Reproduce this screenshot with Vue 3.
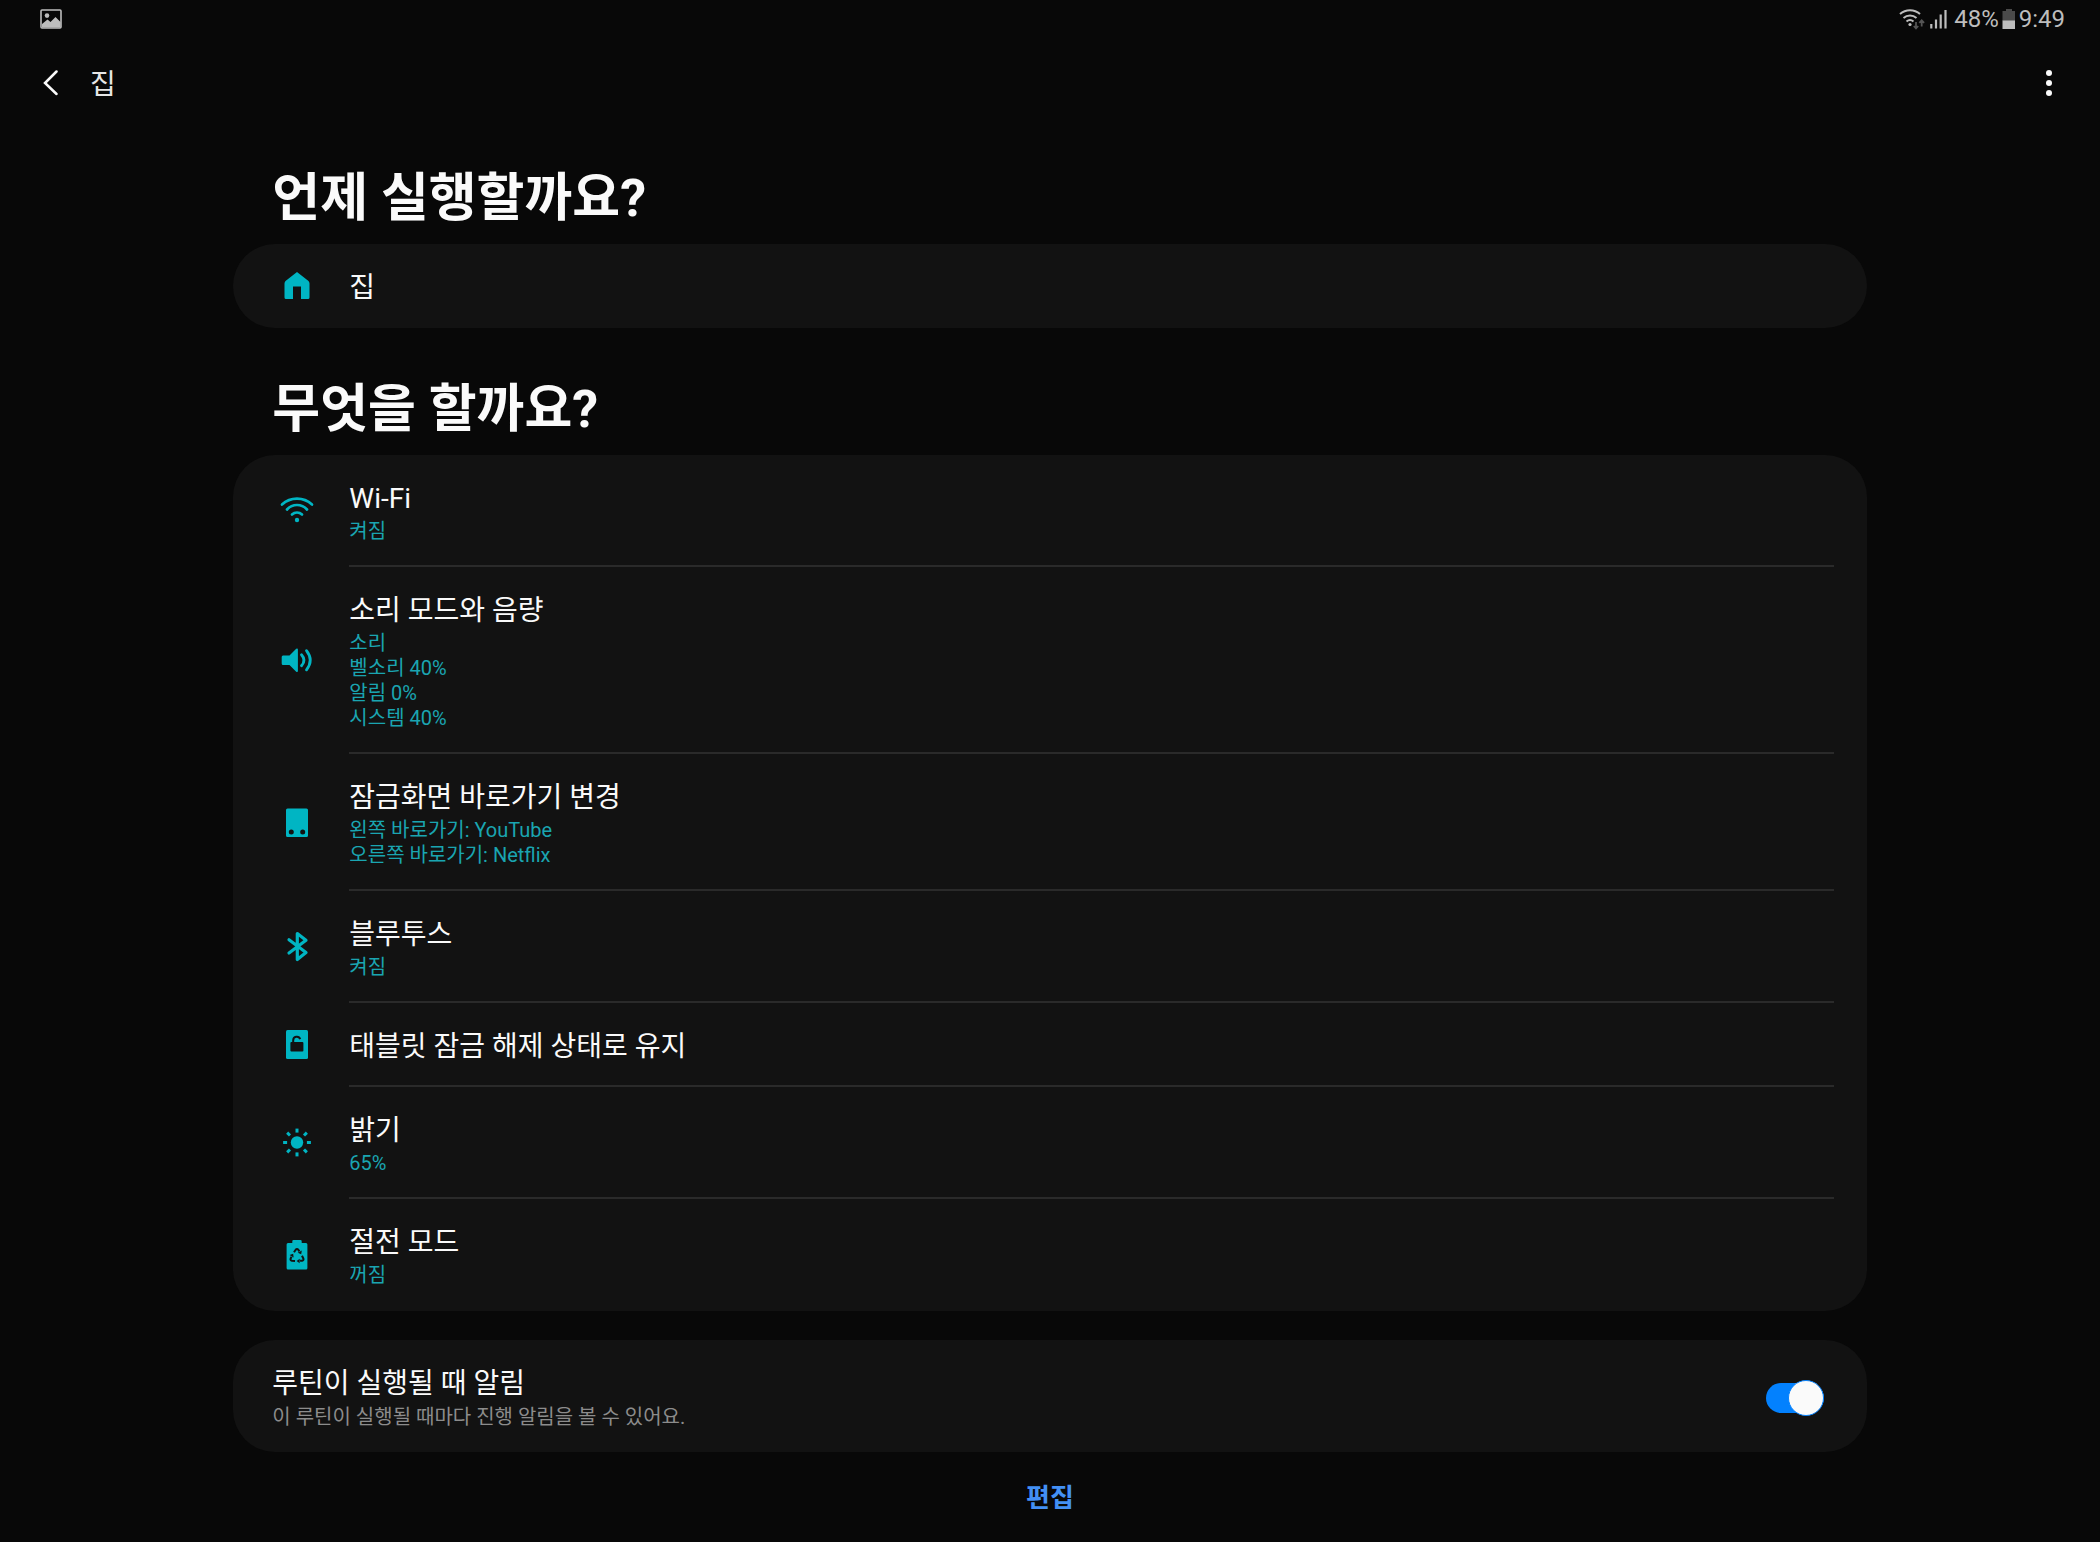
<script setup>
import { ref } from 'vue'

const notify = ref(true)

const actions = [
  { icon: 'wifi', title: 'Wi-Fi', details: ['켜짐'] },
  { icon: 'sound', title: '소리 모드와 음량', details: ['소리', '벨소리 40%', '알림 0%', '시스템 40%'] },
  { icon: 'tablet', title: '잠금화면 바로가기 변경', details: ['왼쪽 바로가기: YouTube', '오른쪽 바로가기: Netflix'] },
  { icon: 'bluetooth', title: '블루투스', details: ['켜짐'] },
  { icon: 'unlock', title: '태블릿 잠금 해제 상태로 유지', details: [] },
  { icon: 'brightness', title: '밝기', details: ['65%'] },
  { icon: 'battery', title: '절전 모드', details: ['꺼짐'] },
]
</script>

<template>
  <div class="screen">
    <div class="status-bar">
      <svg class="picture" viewBox="0 0 22 20" width="22" height="20" aria-hidden="true">
        <rect x="1" y="1" width="20" height="18" rx="1" fill="none" stroke="#bdbdbd" stroke-width="1.6" />
        <circle cx="7" cy="6.600" r="2.300" fill="#bdbdbd" />
        <path d="M2 15 L7.500 10.500 L10.500 13 L15.500 8 L20.500 13 V18.500 H2Z" fill="#bdbdbd" />
      </svg>
      <div class="status-right">
        <svg viewBox="0 0 27 22" width="27" height="22" fill="none" aria-hidden="true">
          <g stroke="#bdbdbd" stroke-width="2">
            <path d="M1 6 A15 15 0 0 1 21 6" />
            <path d="M4.500 10 A10 10 0 0 1 17.500 10" />
            <path d="M7.500 13.500 A5.500 5.500 0 0 1 14.500 13.500" />
          </g>
          <circle cx="11" cy="16.500" r="1.600" fill="#bdbdbd" />
          <path d="M17 14 V20 M14.800 18 L17 20.400 L19.200 18 M22.700 18.500 V12.500 M20.300 14.800 L22.700 12.300 L25.100 14.800" stroke="#555" stroke-width="1.800" />
        </svg>
        <svg class="signal" viewBox="0 0 17 20" width="17" height="20" aria-hidden="true">
          <path d="M1.300 15 V19.500 M6 10.500 V19.500 M10.700 5.500 V19.500 M15.500 1 V19.500" stroke="#bdbdbd" stroke-width="2.200" />
        </svg>
        <span>48%</span>
        <svg class="charge" viewBox="0 0 14 20" width="14" height="20" aria-hidden="true">
          <path d="M4 0 H10 V2 H13 V12 H0.500 V2 H4Z" fill="#4a4a4a" />
          <rect x="0.500" y="11.500" width="12.500" height="8.500" fill="#bdbdbd" />
        </svg>
        <span>9:49</span>
      </div>
    </div>

    <header class="toolbar">
      <button class="back" type="button" aria-label="뒤로">
        <svg viewBox="0 0 16 26" width="16" height="26" aria-hidden="true">
          <path d="M13.500 1.500 L2 13 L13.500 24" fill="none" stroke="#fafafa" stroke-width="2.500" stroke-linecap="round" />
        </svg>
      </button>
      <h1>집</h1>
      <button class="more" type="button" aria-label="옵션 더보기">
        <svg viewBox="0 0 8 28" width="8" height="28" fill="#fafafa" aria-hidden="true">
          <circle cx="4" cy="4" r="3" /><circle cx="4" cy="14" r="3" /><circle cx="4" cy="24" r="3" />
        </svg>
      </button>
    </header>

    <main>
      <section>
        <h2>언제 실행할까요?</h2>
        <div class="card">
          <div class="row">
            <svg class="icon" viewBox="-20 -20 40 40" aria-hidden="true">
              <path d="M0 -14 L11.500 -5 Q12.500 -4 12.500 -2.500 V11.500 Q12.500 13 11 13 H4 V0.500 H-4 V13 H-11 Q-12.500 13 -12.500 11.500 V-2.500 Q-12.500 -4 -11.500 -5Z" />
            </svg>
            <div class="body"><h3>집</h3></div>
          </div>
        </div>
      </section>

      <section>
        <h2>무엇을 할까요?</h2>
        <div class="card">
          <div v-for="a in actions" :key="a.title" class="row">
            <svg class="icon" viewBox="-20 -19 40 40" aria-hidden="true">
              <g v-if="a.icon === 'wifi'">
                <g class="line" stroke-width="2.700">
                  <path d="M-15 -5.500 A22 22 0 0 1 15 -5.500" />
                  <path d="M-10 -0.500 A13.400 13.400 0 0 1 10 -0.500" />
                  <path d="M-5 4.500 A7.200 7.200 0 0 1 5 4.500" />
                </g>
                <circle cy="10" r="2.200" />
              </g>
              <g v-else-if="a.icon === 'sound'">
                <path d="M-14 -4.500 H-7.500 L-0.800 -11.300 Q0.900 -12 0.900 -10.500 V11 Q0.900 12.500 -0.800 11.800 L-7.500 5 H-14 Q-15.300 5 -15.300 3.500 V-3 Q-15.300 -4.500 -14 -4.500Z" />
                <g class="line" stroke-width="2.800">
                  <path d="M4.500 -5.300 Q9.500 0.300 4.500 5.800" />
                  <path d="M9.500 -9.300 Q17 0.300 9.500 9.800" />
                </g>
              </g>
              <path v-else-if="a.icon === 'tablet'" fill-rule="evenodd" d="M-9.500 -13.500 H9.500 Q11 -13.500 11 -12 V13.500 Q11 15 9.500 15 H-9.500 Q-11 15 -11 13.500 V-12 Q-11 -13.500 -9.500 -13.500Z M-8.200 10 a2.500 2.500 0 1 0 5 0 a2.500 2.500 0 1 0 -5 0Z M3.200 10 a2.500 2.500 0 1 0 5 0 a2.500 2.500 0 1 0 -5 0Z" />
              <path v-else-if="a.icon === 'bluetooth'" class="line" stroke-width="3.200" d="M-8 -6.300 L9 6.500 L0.300 13.500 V-12.500 L9 -5.800 L-8 7" />
              <g v-else-if="a.icon === 'unlock'">
                <rect x="-11" y="-14" width="22" height="29" rx="1.500" />
                <rect class="hole" x="-6.600" y="-2" width="13" height="9.500" rx="1" />
                <path class="hole-line" d="M-3.800 -1 V-3.500 A3.600 3.600 0 0 1 3.200 -4.800" />
              </g>
              <g v-else-if="a.icon === 'brightness'">
                <circle cy="0.500" r="6.200" />
                <path v-for="n in 8" :key="n" class="ray" d="M0 -13.900 V-9.900" :transform="`translate(0 .5) rotate(${n * 45})`" />
              </g>
              <g v-else>
                <path d="M-3.500 -14 H3.500 Q4.700 -14 4.700 -12.800 V-11 H9 Q10.400 -11 10.400 -9.500 V14 Q10.400 15.500 9 15.500 H-9 Q-10.400 15.500 -10.400 14 V-9.500 Q-10.400 -11 -9 -11 H-4.700 V-12.800 Q-4.700 -14 -3.500 -14Z" />
                <g class="hole">
                  <g v-for="n in 3" :key="n" :transform="`translate(0 2.300) rotate(${n * 120})`">
                    <path class="hole-line" stroke-linejoin="round" d="M-3 -4 L-1.300 -6.600 Q0 -8 1.300 -6.600 L2.400 -4.900" />
                    <path d="M4.800 -5.800 L4.200 -2 L0.700 -3.500Z" />
                  </g>
                </g>
              </g>
            </svg>
            <div class="body">
              <h3>{{ a.title }}</h3>
              <div v-if="a.details.length" class="details">
                <p v-for="d in a.details" :key="d">{{ d }}</p>
              </div>
            </div>
          </div>
        </div>
      </section>

      <div class="card notice">
        <label for="notify">
          <span class="notice-title">루틴이 실행될 때 알림</span>
          <span class="notice-text">이 루틴이 실행될 때마다 진행 알림을 볼 수 있어요.</span>
        </label>
        <input id="notify" v-model="notify" class="switch" type="checkbox" role="switch" />
      </div>

      <button class="edit" type="button">편집</button>
    </main>
  </div>
</template>

<style>
html,
body {
  margin: 0;
  background: #080808;
}
</style>

<style scoped>
.screen {
  min-height: 100vh;
  background: #080808;
  color: #fafafa;
  font-family: Roboto, "Noto Sans CJK KR", sans-serif;
}

h1,
h2,
h3,
p {
  margin: 0;
  font-weight: 400;
}

button {
  display: flex;
  align-items: center;
  justify-content: center;
  padding: 0;
  border: 0;
  background: none;
  color: inherit;
  font: inherit;
  cursor: pointer;
}

.status-bar {
  display: flex;
  align-items: center;
  justify-content: space-between;
  height: 38px;
  padding: 0 35px 0 40px;
  color: #bdbdbd;
  font-size: 24px;
}

.status-right {
  display: flex;
  align-items: center;
  gap: 3px;
}

.signal {
  margin: 0 4px 0 1px;
}

.toolbar {
  display: flex;
  align-items: center;
  height: 90px;
  padding: 0 35px 0 34px;
}

.back {
  width: 34px;
  height: 48px;
}

.toolbar h1 {
  flex: 1;
  padding: 4px 0 0 22px;
  color: #e6e6e6;
  font-size: 28px;
  line-height: 40px;
}

.more {
  width: 32px;
  height: 48px;
}

main {
  display: grid;
  grid-template-columns: 1fr 7fr 1fr;
}

main > * {
  grid-column: 2;
}

section {
  margin-bottom: 11px;
}

h2 {
  padding: 33px 39px 7px;
  font-size: 52px;
  font-weight: 700;
  line-height: 76px;
}

.card {
  border-radius: 42px;
  background: #121212;
}

.row {
  display: flex;
  align-items: center;
  gap: 27px;
  padding: 0 33px 0 39px;
}

.icon {
  flex: none;
  width: 50px;
  height: 40px;
  fill: #00b5c3;
}

.line,
.ray {
  fill: none;
  stroke: #00b5c3;
  stroke-linecap: round;
  stroke-linejoin: round;
}

.ray {
  stroke-width: 3px;
  stroke-linecap: butt;
}

.hole {
  fill: #121212;
}

.hole-line {
  fill: none;
  stroke: #121212;
  stroke-width: 2px;
}

.body {
  flex: 1;
  box-sizing: border-box;
  padding: 26px 0 22px;
}

.row + .row .body {
  box-shadow: 0 -2px 0 #2a2a2a;
}

h3,
.notice-title {
  font-size: 28px;
  line-height: 36px;
}

.details {
  padding: 2px 0 1px;
  color: #1aa5b1;
  font-size: 20px;
  line-height: 25px;
}

.notice {
  display: flex;
  align-items: center;
  justify-content: space-between;
  margin-top: 18px;
  padding: 26px 43px 22px 39px;
}

.notice label {
  display: flex;
  flex-direction: column;
  gap: 3px;
}

.notice-text {
  color: #8c8c8c;
  font-size: 20px;
  line-height: 25px;
}

.switch {
  display: flex;
  align-items: center;
  justify-content: flex-start;
  width: 58px;
  height: 30px;
  margin: 0;
  border-radius: 15px;
  background: #555;
  appearance: none;
  cursor: pointer;
}

.switch::before {
  flex: none;
  box-sizing: border-box;
  width: 36px;
  height: 36px;
  border: 1px solid #0381fe;
  border-radius: 50%;
  background: #fafafa;
  content: "";
}

.switch:checked {
  justify-content: flex-end;
  background: #0381fe;
}

.edit {
  justify-self: center;
  width: 120px;
  height: 60px;
  margin: 13px 0 16px;
  color: #4390f5;
  font-size: 26px;
  font-weight: 700;
}
</style>
